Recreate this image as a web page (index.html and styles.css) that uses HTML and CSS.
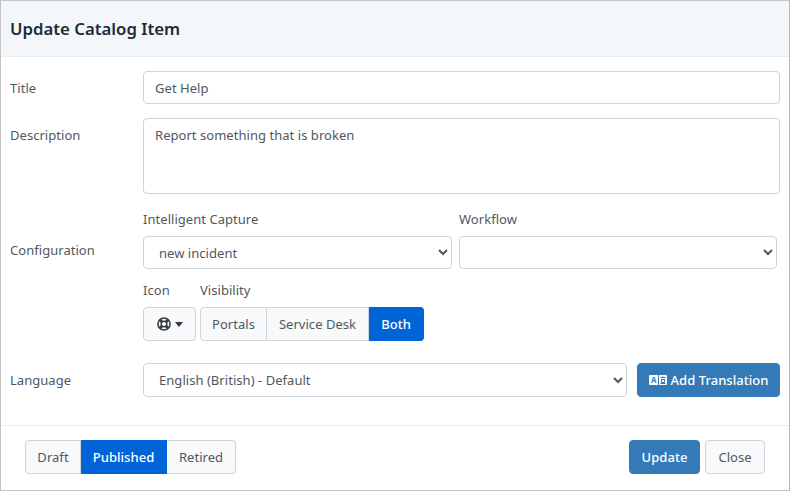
FILE: index.html
```html
<!DOCTYPE html>
<html lang="en">

<head>
    <meta charset="UTF-8">
    <meta name="viewport" content="width=device-width, initial-scale=1.0">
    <title>Update Catalog Item</title>
    <link rel="stylesheet" href="styles.css">
</head>

<body>

    <div class="modal">
        <div class="modal-header">
            <h1>Update Catalog Item</h1>
        </div>

        <div class="modal-body">
            <div class="form-row">
                <label class="row-label">Title</label>
                <input class="field" type="text" value="Get Help">
            </div>

            <div class="form-row">
                <label class="row-label label-description">Description</label>
                <textarea class="field field-area">Report something that is broken</textarea>
            </div>

            <div class="form-row form-row-config">
                <label class="row-label label-config">Configuration</label>
                <div>
                    <div class="config-selects">
                        <div class="config-capture">
                            <div class="sub-label">Intelligent Capture</div>
                            <select class="field field-select">
                                <option>new incident</option>
                            </select>
                        </div>
                        <div class="config-workflow">
                            <div class="sub-label">Workflow</div>
                            <select class="field field-select">
                                <option></option>
                            </select>
                        </div>
                    </div>
                    <div class="config-buttons">
                        <div>
                            <div class="sub-label">Icon</div>
                            <button class="btn btn-icon" type="button">
                                <svg width="14" height="14" viewBox="0 0 14 14" fill="none" stroke="#343a40">
                                    <path d="M2.6 2.6l2.6 2.6M11.4 2.6L8.8 5.2M2.6 11.4l2.6-2.6M11.4 11.4L8.8 8.8" stroke-width="2.8"></path>
                                    <circle cx="7" cy="7" r="6.1" stroke-width="1.5"></circle>
                                    <circle cx="7" cy="7" r="2.8" stroke-width="1.4"></circle>
                                </svg>
                                <span class="caret"></span>
                            </button>
                        </div>
                        <div>
                            <div class="sub-label">Visibility</div>
                            <div class="btn-group">
                                <button class="btn btn-portals" type="button">Portals</button>
                                <button class="btn btn-desk" type="button">Service Desk</button>
                                <button class="btn btn-both active" type="button">Both</button>
                            </div>
                        </div>
                    </div>
                </div>
            </div>

            <div class="form-row form-row-language">
                <label class="row-label">Language</label>
                <div class="language-line">
                    <select class="field field-select field-language">
                        <option>English (British) - Default</option>
                    </select>
                    <button class="btn btn-primary btn-translate" type="button">
                        <svg width="18" height="12" viewBox="0 0 18 12">
                            <rect x="0" y="1" width="18" height="10" rx="1" fill="#fff"></rect>
                            <rect x="9" y="1" width="1" height="10" fill="#337ab7"></rect>
                            <text x="2" y="9" class="icon-letter">A</text>
                            <path d="M11.5 3.5h5M14 2.5v1.5M12 5.5h4M12.5 5.5v3h3v-3M11.5 9.5h5" fill="none" stroke="#337ab7"></path>
                        </svg>
                        Add Translation
                    </button>
                </div>
            </div>
        </div>

        <div class="modal-footer">
            <div class="btn-group">
                <button class="btn btn-draft" type="button">Draft</button>
                <button class="btn btn-published active" type="button">Published</button>
                <button class="btn btn-retired" type="button">Retired</button>
            </div>
            <div class="footer-actions">
                <button class="btn btn-primary btn-update" type="button">Update</button>
                <button class="btn btn-close" type="button">Close</button>
            </div>
        </div>
    </div>

</body>

</html>
```

FILE: styles.css
```css
* {
    box-sizing: border-box;
}

body {
    margin: 0;
    font-family: "Noto Sans", Arial, sans-serif;
    font-size: 13px;
    letter-spacing: 0.04px;
    color: #50585f;
    background-color: #fff;
}

.modal {
    display: flex;
    flex-direction: column;
    height: 491px;
    border: 1px solid #c4c4c4;
    border-right-color: #b5b5b5;
}

.modal-header {
    height: 56px;
    padding: 0 9px;
    display: flex;
    align-items: center;
    background-color: #f4f7fa;
    border-bottom: 1px solid #e9ecef;
}

h1 {
    margin: 0;
    font-size: 16.75px;
    font-weight: 600;
    letter-spacing: 0;
    color: #212b36;
}

.modal-body {
    flex: 1;
    padding: 14px 9px 0;
}

.form-row {
    display: grid;
    grid-template-columns: 133px 1fr;
    margin-bottom: 14px;
}

.row-label {
    align-self: center;
}

.label-description {
    align-self: start;
    padding-top: 8px;
}

.label-config {
    align-self: start;
    padding-top: 32px;
}

.field {
    display: block;
    width: 100%;
    height: 33px;
    padding: 0 11px;
    border: 1px solid #ced4da;
    border-radius: 4px;
    font: inherit;
    letter-spacing: inherit;
    color: #50585f;
    background-color: #fff;
}

.field-area {
    height: 76px;
    padding: 7px 11px;
    resize: none;
}

.field-select {
    padding: 0 11px;
}

.form-row-config {
    margin-top: 15px;
    margin-bottom: 22px;
}

.config-selects {
    display: flex;
    gap: 7px;
    padding-right: 3px;
}

.config-capture {
    width: 309px;
}

.config-workflow {
    flex: 1;
}

.sub-label {
    height: 20px;
    margin-bottom: 7px;
    line-height: 20px;
}

.config-buttons {
    display: flex;
    gap: 4px;
    margin-top: 11px;
}

.btn {
    height: 34px;
    padding: 0 12px;
    border: 1px solid #ced4da;
    border-radius: 4px;
    font: inherit;
    letter-spacing: inherit;
    color: #50585f;
    background-color: #f8f9fa;
}

.btn-icon {
    display: flex;
    align-items: center;
    justify-content: center;
    gap: 4px;
    width: 53px;
    padding: 0;
}

.caret {
    width: 0;
    height: 0;
    border-top: 5px solid #343a40;
    border-left: 4px solid transparent;
    border-right: 4px solid transparent;
}

.btn-group {
    display: flex;
}

.btn-group .btn {
    padding: 0;
    border-radius: 0;
}

.btn-group .btn:first-child {
    border-radius: 4px 0 0 4px;
}

.btn-group .btn:last-child {
    border-radius: 0 4px 4px 0;
}

.btn-group .btn + .btn {
    border-left: 0;
}

.btn-group .btn.active {
    border-color: #0064d6;
    background-color: #0064d6;
    color: #fff;
    font-weight: 500;
}

.btn-portals {
    width: 67px;
}

.btn-desk {
    width: 102px;
}

.btn-both {
    width: 55px;
}

.btn-draft {
    width: 56px;
}

.btn-published {
    width: 86px;
}

.btn-retired {
    width: 69px;
}

.btn-primary {
    border-color: #337ab7;
    background-color: #337ab7;
    color: #fff;
    font-weight: 500;
}

.language-line {
    display: flex;
    justify-content: space-between;
    align-items: stretch;
}

.field-language {
    width: 484px;
    height: 34px;
}

.btn-translate {
    display: flex;
    align-items: center;
    justify-content: center;
    gap: 4px;
    width: 143px;
    padding: 0;
}

.icon-letter {
    font-size: 8px;
    font-weight: 700;
    fill: #337ab7;
}

.modal-footer {
    display: flex;
    justify-content: space-between;
    height: 65px;
    padding: 14px 24px 0;
    border-top: 1px solid #e9ecef;
}

.footer-actions {
    display: flex;
    gap: 5px;
}

.btn-update {
    width: 71px;
    padding: 0;
}

.btn-close {
    width: 60px;
    padding: 0;
}
```
